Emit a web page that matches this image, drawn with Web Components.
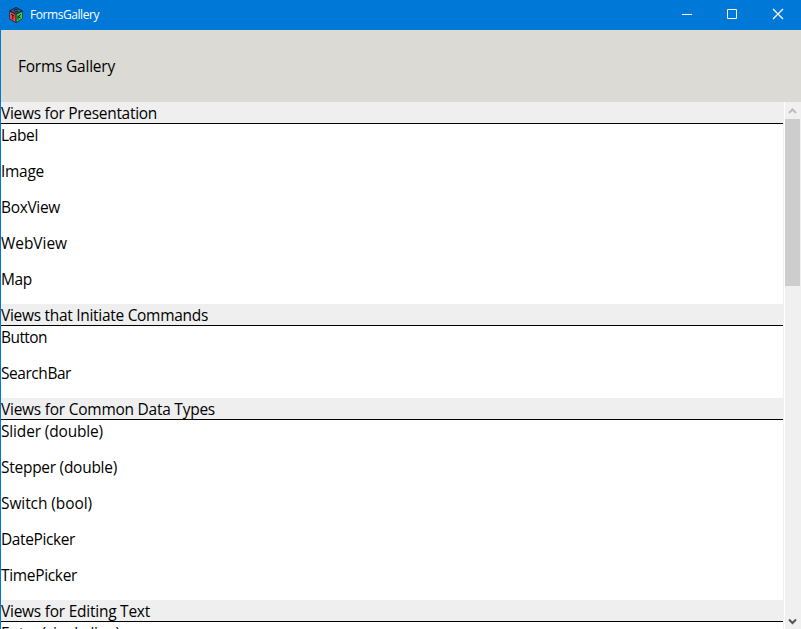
<!DOCTYPE html>
<html lang="en"><head><meta charset="utf-8"><title>FormsGallery</title>
<style>html,body{margin:0;height:100%;overflow:hidden}body{font-family:"Open Sans","Noto Sans",sans-serif;font-size:15.47px;color:#000}</style></head>
<body><gallery-window></gallery-window>
<script>
const define=(name,html,setup)=>{const t=document.createElement('template');t.innerHTML=html;
customElements.define(name,class extends HTMLElement{constructor(){super();this.attachShadow({mode:'open'}).append(t.content.cloneNode(true));}
connectedCallback(){if(setup)setup(this);}});};
// Text run whose tracking is adjusted to fill the width given in "w"
define('fit-text','<style>:host{display:inline-block;white-space:nowrap}</style><span></span>',el=>{
const s=el.shadowRoot.querySelector('span'),t=el.getAttribute('text');s.textContent=t;
const w=s.getBoundingClientRect().width;s.style.letterSpacing=((+el.getAttribute('w')-w)/t.length)+'px';});
define('app-icon',`<style>:host{display:block;width:14px;height:16px}svg{display:block}</style>
<svg width="14" height="16" viewBox="0 0 14 16"><path d="M7 0 13.5 3.5V12L7 16 .5 12V3.5z" fill="#15181c"/><path d="M7 .8 12.4 3.7 7 6.7 1.6 3.7z" fill="#2c5c9c"/><path d="M1 4.8 6.5 7.6V14.9L1 11.7z" fill="#f04444"/><path d="M13 4.8 7.5 7.6V14.9L13 11.7z" fill="#30cc50"/><path d="M8.7 2.6Q6 1.6 5 3.4 6 5.5 9 4.6M2.2 7.3 5.4 9M3.8 8.2V12.3M9 8.5V12.6M11.7 7.2 9.4 10 11.7 11" fill="none" stroke="#111" stroke-width=".9"/></svg>`);
define('title-bar',`<style>:host{display:flex;height:30px;background:#0078d7;color:#fff;font-size:12px;align-items:center;box-sizing:border-box;padding-left:9px}
fit-text{margin-left:7px;line-height:16px;flex:1}svg{display:block}app-icon{margin-top:-1px}</style>
<app-icon></app-icon><fit-text text="FormsGallery" w="69"></fit-text>
<svg width="138" height="30" viewBox="663 0 138 30" fill="none" stroke="#fff"><path d="M682 14.5h10M727.5 9.5h9v9h-9z"/><path d="M773 9l10 10M783 9l-10 10" stroke-width="1.3"/></svg>`);
define('page-header',`<style>:host{display:flex;align-items:center;height:72px;background:#dbdad5;padding-left:17px;box-sizing:border-box}fit-text{line-height:22px}</style><fit-text text="Forms Gallery" w="97"></fit-text>`);
define('group-header',`<style>:host{display:block;height:22px;box-sizing:border-box;background:#efefef;border-bottom:1px solid #000;line-height:22px}</style><slot></slot>`);
define('list-item',`<style>:host{display:block;height:36px;line-height:22px}</style><slot></slot>`);
define('scroll-bar',`<style>:host{display:flex;flex-direction:column;width:16px;background:#f0f0f0}svg{display:block}.thumb{height:167px;width:15px;background:#cdcdcd}.gap{flex:1}</style>
<svg width="15" height="17" fill="none" stroke="#bcbcbc" stroke-width="2"><path d="M4 11 7.5 7.5 11 11"/></svg><div class="thumb"></div><div class="gap"></div><svg width="15" height="17" fill="none" stroke="#555" stroke-width="2"><path d="M4 7.5 7.5 11 11 7.5"/></svg>`);
const groups=[['Views for Presentation',157,[['Label',38],['Image',44],['BoxView',60],['WebView',67],['Map',32]]],
['Views that Initiate Commands',208,[['Button',47],['SearchBar',71]]],
['Views for Common Data Types',215,[['Slider (double)',103],['Stepper (double)',117],['Switch (bool)',92],['DatePicker',75],['TimePicker',77]]],
['Views for Editing Text',150,[['Entry (single line)',120]]]];
define('gallery-list','<style>:host{display:block;overflow:hidden;background:#fff}</style><div></div>',el=>{
const txt=(t,r)=>`<fit-text text="${t}" w="${r-1}"></fit-text>`;
el.shadowRoot.querySelector('div').innerHTML=groups.map(([t,r,items])=>`<group-header>${txt(t,r)}</group-header>`+items.map(([a,b])=>`<list-item>${txt(a,b)}</list-item>`).join('')).join('');});
define('gallery-window',`<style>:host{display:flex;flex-direction:column;width:801px;height:629px;background:#fff;overflow:hidden}
.body{flex:1;min-height:0;display:flex;flex-direction:column;border-left:1px solid #0078d7}.content{flex:1;min-height:0;display:grid;grid-template-columns:782px 1px 1px 16px;overflow:hidden}.edge{background:#f0f0f0}gallery-list{min-height:0}</style>
<title-bar></title-bar><div class="body"><page-header></page-header><div class="content"><gallery-list></gallery-list><div class="edge"></div><div></div><scroll-bar></scroll-bar></div></div>`);
</script></body></html>
